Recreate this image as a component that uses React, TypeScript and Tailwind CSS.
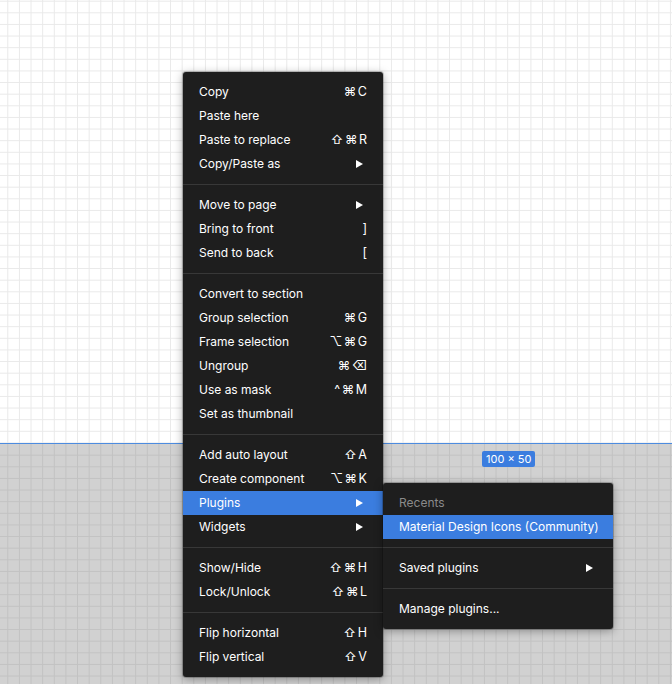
import type { ReactNode } from 'react';

type Item = { label: string; shortcut?: string; sub?: boolean; active?: boolean };

const sections: Item[][] = [
  [
    { label: 'Copy', shortcut: '⌘C' },
    { label: 'Paste here' },
    { label: 'Paste to replace', shortcut: '⇧⌘R' },
    { label: 'Copy/Paste as', sub: true },
  ],
  [
    { label: 'Move to page', sub: true },
    { label: 'Bring to front', shortcut: ']' },
    { label: 'Send to back', shortcut: '[' },
  ],
  [
    { label: 'Convert to section' },
    { label: 'Group selection', shortcut: '⌘G' },
    { label: 'Frame selection', shortcut: '⌥⌘G' },
    { label: 'Ungroup', shortcut: '⌘⌫' },
    { label: 'Use as mask', shortcut: '^⌘M' },
    { label: 'Set as thumbnail' },
  ],
  [
    { label: 'Add auto layout', shortcut: '⇧A' },
    { label: 'Create component', shortcut: '⌥⌘K' },
    { label: 'Plugins', sub: true, active: true },
    { label: 'Widgets', sub: true },
  ],
  [
    { label: 'Show/Hide', shortcut: '⇧⌘H' },
    { label: 'Lock/Unlock', shortcut: '⇧⌘L' },
  ],
  [
    { label: 'Flip horizontal', shortcut: '⇧H' },
    { label: 'Flip vertical', shortcut: '⇧V' },
  ],
];

function Arrow() {
  return (
    <svg width="7" height="8" viewBox="0 0 7 8" className="mr-1">
      <path d="M0 0 L7 4 L0 8 Z" fill="#ffffff" />
    </svg>
  );
}

function Row({ item }: { item: Item }) {
  return (
    <div
      className={`flex h-6 items-center justify-between whitespace-nowrap px-4 text-[12px] text-white ${
        item.active ? 'bg-[#3b7ddf]' : ''
      }`}
    >
      <span>{item.label}</span>
      {item.sub ? (
        <Arrow />
      ) : (
        <span className="font-['Inter','DejaVu_Sans',sans-serif] text-[12.5px] tracking-[1.5px] -mr-[1.5px]">
          {item.shortcut}
        </span>
      )}
    </div>
  );
}

function Separator() {
  return <div className="my-2 h-px bg-[#383838]" />;
}

function Menu({ className, children }: { className: string; children: ReactNode }) {
  return (
    <div
      className={`absolute rounded-[3px] bg-[#1e1e1e] py-2 font-['Inter',sans-serif] shadow-[0_2px_10px_rgba(0,0,0,0.35)] ring-1 ring-black/20 ${className}`}
    >
      {children}
    </div>
  );
}

export default function App() {
  return (
    <div className="relative h-[684px] w-[672px] overflow-hidden">
      <div className="flex h-full flex-col">
        <div className="h-[443px] bg-white bg-[linear-gradient(to_right,#e9e9e9_1px,transparent_1px),linear-gradient(to_bottom,#e9e9e9_1px,transparent_1px)] bg-[length:11.64px_11.64px] bg-[position:7.3px_0.7px]" />
        <div className="h-px bg-[#4d8ce0]" />
        <div className="flex-1 bg-[#d1d1d1] bg-[linear-gradient(to_right,#c2c2c2_1px,transparent_1px),linear-gradient(to_bottom,#c2c2c2_1px,transparent_1px)] bg-[length:11.64px_11.64px] bg-[position:7.3px_10.7px]" />
      </div>

      <div className="absolute left-[482px] top-[451px] rounded-[2px] bg-[#3b7ddf] px-1 py-px font-['Inter',sans-serif] text-[11px] leading-[14px] text-white">
        100 × 50
      </div>

      <Menu className="left-[183px] top-[72px] w-[200px]">
        {sections.map((sec, i) => (
          <div key={i}>
            {i > 0 && <Separator />}
            {sec.map((it) => (
              <Row key={it.label} item={it} />
            ))}
          </div>
        ))}
      </Menu>

      <Menu className="left-[383px] top-[483px] w-[230px]">
        <div className="flex h-6 items-center px-4 text-[12px] text-[#8a8a8a]">Recents</div>
        <Row item={{ label: 'Material Design Icons (Community)', active: true }} />
        <Separator />
        <Row item={{ label: 'Saved plugins', sub: true }} />
        <Separator />
        <Row item={{ label: 'Manage plugins...' }} />
      </Menu>
    </div>
  );
}
